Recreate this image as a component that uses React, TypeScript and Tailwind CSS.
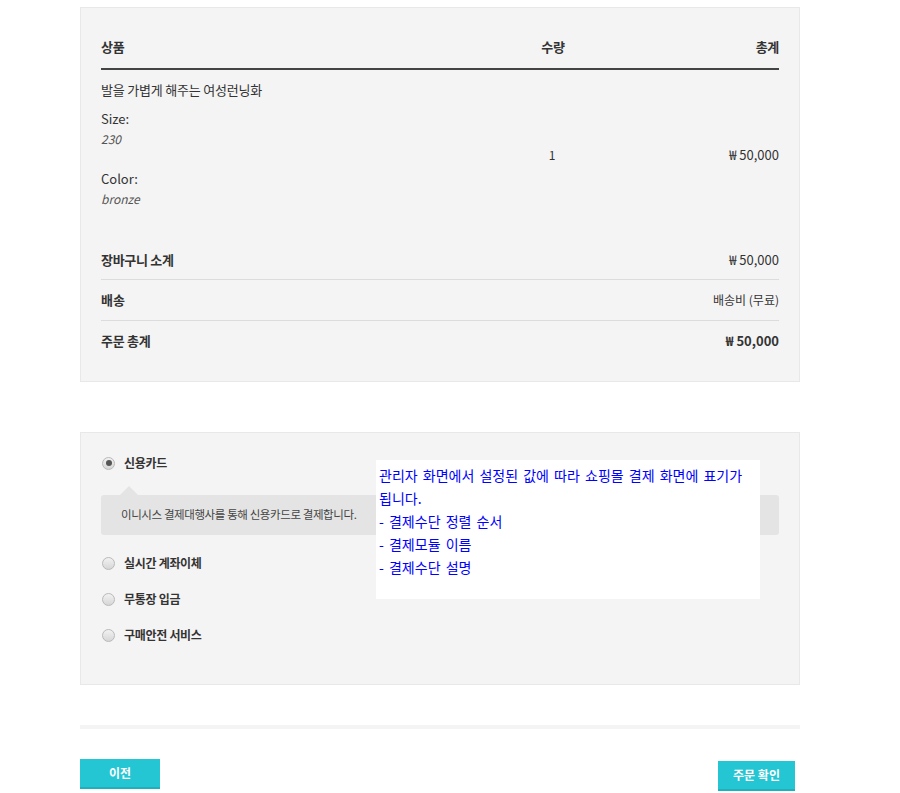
import React from 'react'

const font = { fontFamily: '"Noto Sans CJK KR", "Noto Sans", sans-serif' }

const Radio: React.FC<{ checked?: boolean }> = ({ checked }) => (
  <span className="flex h-[13px] w-[13px] items-center justify-center rounded-full border border-[#b9b9b9] bg-gradient-to-b from-[#f2f2f2] to-[#d6d6d6]">
    {checked && <span className="h-[6px] w-[6px] rounded-full bg-[#555]" />}
  </span>
)

const methods = ['실시간 계좌이체', '무통장 입금', '구매안전 서비스']

const App: React.FC = () => {
  return (
    <div className="h-[793px] w-[900px] overflow-hidden bg-white text-[#333]" style={font}>
      <div className="ml-[80px] w-[720px]">
        {/* Order summary */}
        <div className="mt-[7px] border border-[#e8e8e8] bg-[#f4f4f4] px-[20px] pb-[20px]">
          <div className="grid grid-cols-[1fr_132px_160px] border-b-2 border-[#444] pt-[30px] pb-[12px] text-[13px] font-semibold leading-[18px] tracking-[-0.3px]">
            <span>상품</span>
            <span className="text-center">수량</span>
            <span className="text-right">총계</span>
          </div>
          <div className="grid grid-cols-[1fr_132px_160px] items-center text-[12px]">
            <div className="pt-[11px] pb-[31px] leading-[20px]">
              <div className="mb-[10px] text-[13px] leading-[18px] tracking-[-0.2px]">발을 가볍게 해주는 여성런닝화</div>
              <div className="text-[13px]">Size:</div>
              <div className="italic text-[#555]">230</div>
              <div className="mt-[20px] text-[13px]">Color:</div>
              <div className="italic text-[#555]">bronze</div>
            </div>
            <span className="pr-[2px] text-center">1</span>
            <span className="text-right text-[13px]">₩ 50,000</span>
          </div>
          <div className="text-[13px]">
            <div className="flex h-[40px] items-center justify-between border-b border-[#dcdcdc]">
              <span className="font-semibold tracking-[-0.3px]">장바구니 소계</span>
              <span>₩ 50,000</span>
            </div>
            <div className="flex h-[41px] items-center justify-between border-b border-[#dcdcdc]">
              <span className="font-semibold">배송</span>
              <span className="text-[12px]">배송비 (무료)</span>
            </div>
            <div className="flex h-[40px] items-center justify-between">
              <span className="font-semibold tracking-[-0.3px]">주문 총계</span>
              <span className="font-semibold">₩ 50,000</span>
            </div>
          </div>
        </div>

        {/* Payment methods */}
        <div className="relative mt-[50px] border border-[#e8e8e8] bg-[#f4f4f4] px-[20px] pt-[20px] pb-[39px] text-[12px]">
          <label className="flex h-[20px] items-center gap-[9px] pl-[1px]">
            <Radio checked />
            <span className="font-semibold tracking-[-0.3px]">신용카드</span>
          </label>
          <div className="relative mt-[22px] flex h-[40px] items-center rounded-[3px] bg-[#e4e4e4] px-[20px] text-[11.5px] tracking-[-0.4px] text-[#444]">
            <span className="absolute -top-[9px] left-[19px] h-0 w-0 border-x-[9px] border-b-[9px] border-x-transparent border-b-[#e4e4e4]" />
            이니시스 결제대행사를 통해 신용카드로 결제합니다.
          </div>
          <div className="mt-[18px] flex flex-col gap-[16px]">
            {methods.map((m) => (
              <label key={m} className="flex h-[20px] items-center gap-[9px] pl-[1px]">
                <Radio />
                <span className="font-semibold tracking-[-0.3px]">{m}</span>
              </label>
            ))}
          </div>

          {/* admin note overlay */}
          <div className="absolute top-[27px] left-[295px] h-[139px] w-[384px] bg-white pt-[4px] pl-[3px] text-[14px] leading-[23px] text-[#0000ff] [word-spacing:2px]">
            관리자 화면에서 설정된 값에 따라 쇼핑몰 결제 화면에 표기가 됩니다.
            <br />- 결제수단 정렬 순서
            <br />- 결제모듈 이름
            <br />- 결제수단 설명
          </div>
        </div>

        <div className="mt-[40px] h-[4px] bg-[#f4f4f4]" />

        <div className="mt-[30px] flex items-start justify-between">
          <button className="h-[30px] w-[80px] border-b-2 border-[#1fb0bc] bg-[#24c6d3] text-[12px] font-bold text-white">
            이전
          </button>
          <button className="mt-[2px] mr-[5px] h-[30px] w-[77px] border-b-2 border-[#1fb0bc] bg-[#24c6d3] text-[12px] font-bold text-white">
            주문 확인
          </button>
        </div>
      </div>
    </div>
  )
}

export default App
